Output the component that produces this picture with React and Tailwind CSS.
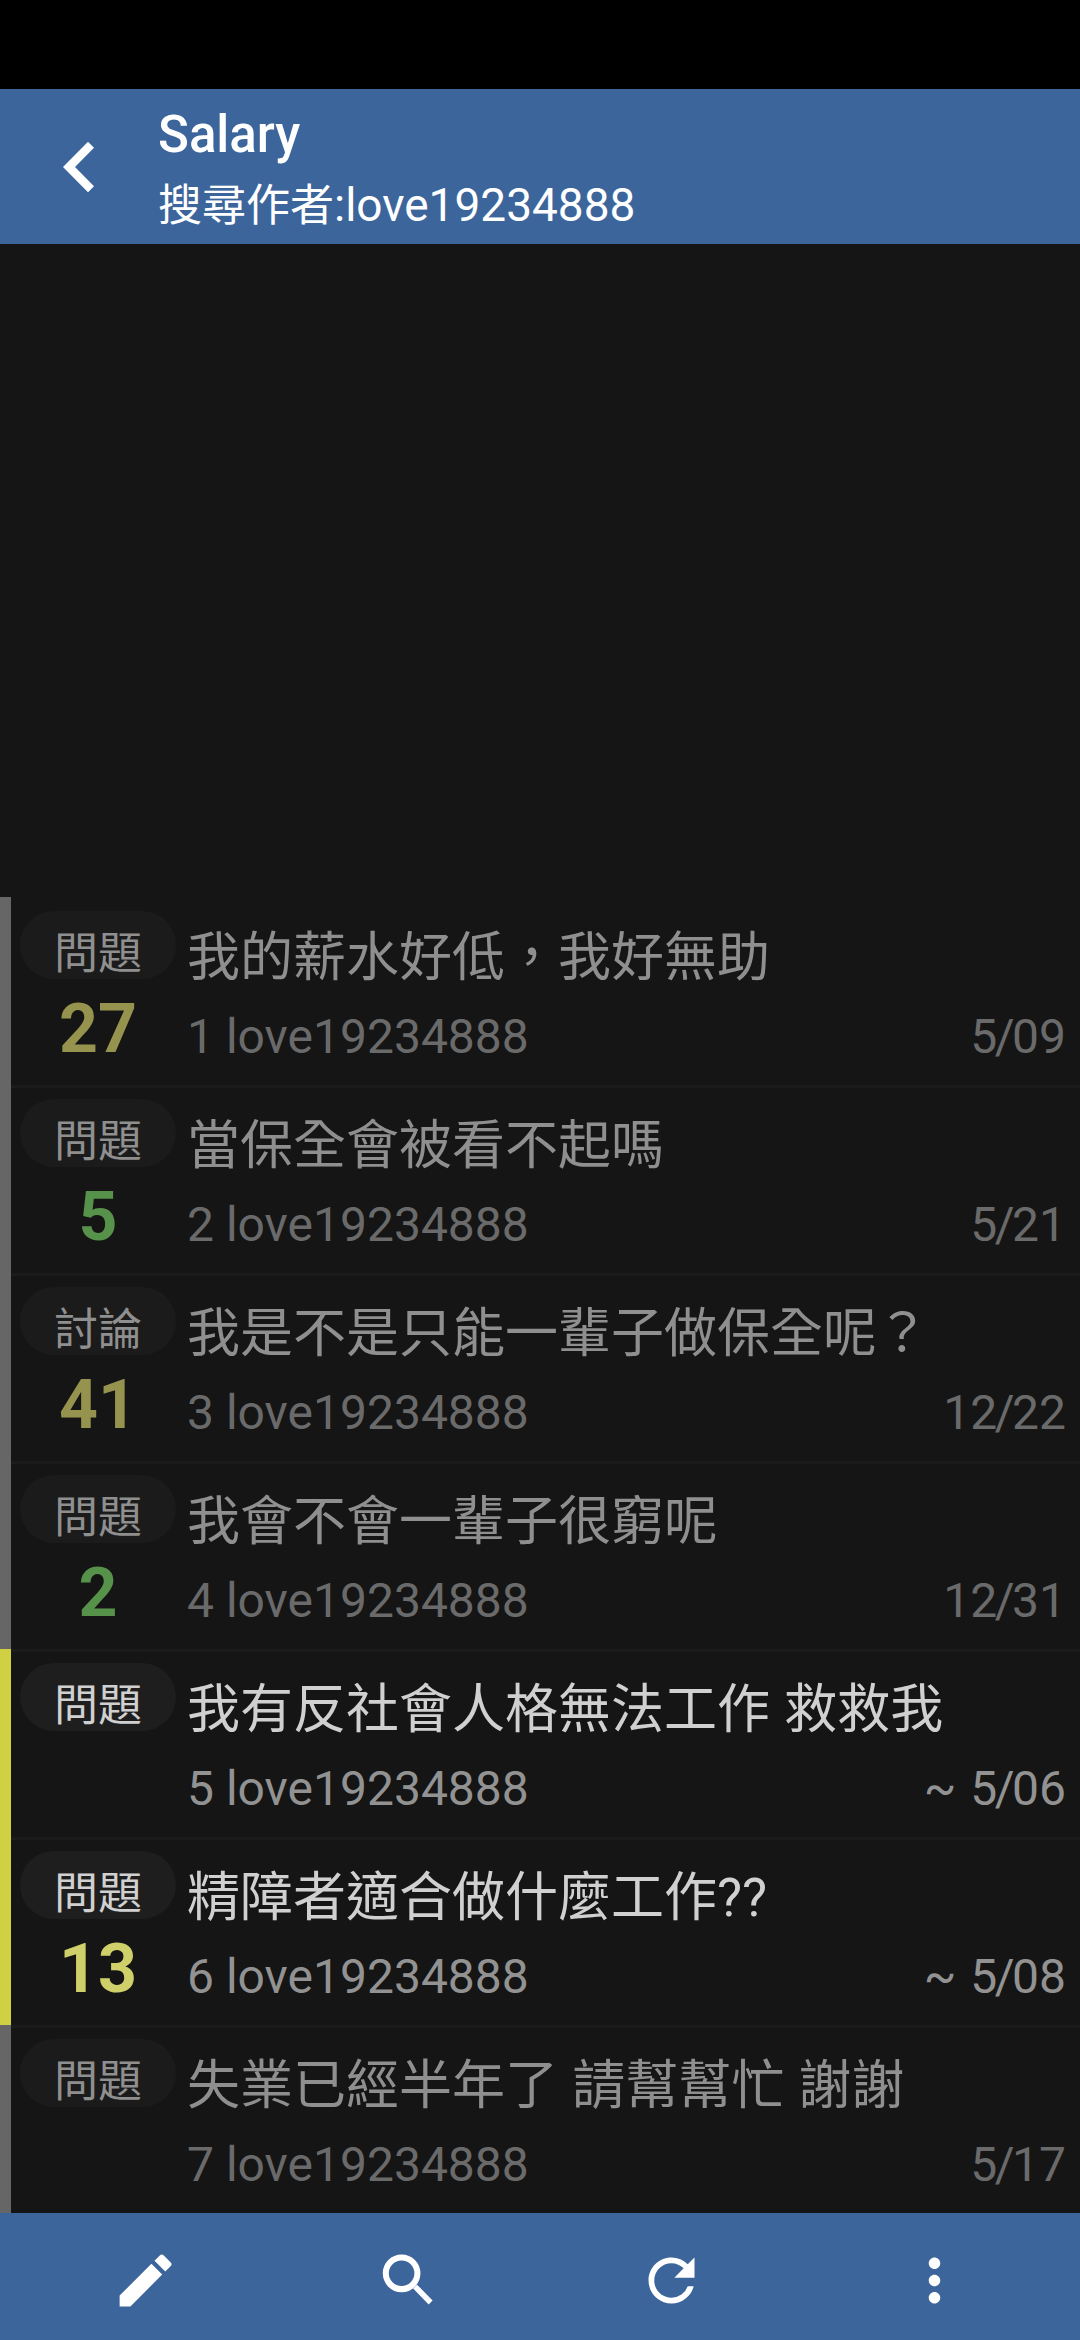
import { Fragment } from "react";
import { MdEdit, MdRefresh, MdMoreVert } from "react-icons/md";

const posts = [
  { tag: "問題", count: "27", tone: "olive", title: "我的薪水好低，我好無助", meta: "1 love19234888", date: "5/09" },
  { tag: "問題", count: "5", tone: "green", title: "當保全會被看不起嗎", meta: "2 love19234888", date: "5/21" },
  { tag: "討論", count: "41", tone: "olive", title: "我是不是只能一輩子做保全呢？", meta: "3 love19234888", date: "12/22" },
  { tag: "問題", count: "2", tone: "green", title: "我會不會一輩子很窮呢", meta: "4 love19234888", date: "12/31" },
  { tag: "問題", count: "", tone: "olive", title: "我有反社會人格無法工作 救救我", meta: "5 love19234888", date: "~ 5/06", unread: true },
  { tag: "問題", count: "13", tone: "yellow", title: "精障者適合做什麼工作??", meta: "6 love19234888", date: "~ 5/08", unread: true },
  { tag: "問題", count: "", tone: "olive", title: "失業已經半年了 請幫幫忙 謝謝", meta: "7 love19234888", date: "5/17" },
];

const tones = {
  olive: "text-[#96934e]",
  green: "text-[#57924a]",
  yellow: "text-[#d0d06a]",
};

// Month and day with a tightly set slash between them.
function PostDate({ value }) {
  return (
    <span className="[word-spacing:2px]">
      {value.split("/").map((part, i) => (
        <Fragment key={i}>
          {i > 0 && <span className="-mx-[2.5px]">/</span>}
          {part}
        </Fragment>
      ))}
    </span>
  );
}

function SearchIcon() {
  return (
    <svg className="size-[69px]" viewBox="0 0 24 24" fill="none" stroke="currentColor">
      <circle cx="9.6" cy="9.5" r="5.5" strokeWidth="2.1" />
      <path d="M14.3 14.1 19.7 19.65" strokeWidth="1.9" />
    </svg>
  );
}

function Post({ post, first }) {
  const { unread } = post;
  return (
    <li className="flex h-[188px]">
      <div className={`w-[11px] shrink-0 ${unread ? "bg-[#cfd142]" : "bg-[#666666]"}`} />
      <div className={`flex min-w-0 flex-1 border-t-[3px] pl-[9px] ${first ? "border-transparent" : "border-[#1b1b1b]"}`}>
        <div className="flex w-[156px] shrink-0 flex-col items-center pt-[11px]">
          <div className={`flex h-[68px] w-full justify-center rounded-full pt-[13px] text-[44px] leading-[60px] ${unread ? "bg-[#1e1e1e] text-[#d0d0d0]" : "bg-[#1b1b1b] text-[#8f8f8f]"}`}>
            {post.tag}
          </div>
          <div className={`mt-[12px] text-[68px] leading-[76px] font-bold ${tones[post.tone]}`}>{post.count}</div>
        </div>
        <div className="min-w-0 flex-1 pr-[14px] pl-[11px]">
          <div className={`mt-[20px] text-[53px] leading-[76px] whitespace-nowrap [word-spacing:1px] ${unread ? "text-[#d0d0d0]" : "text-[#8f8f8f]"}`}>
            {post.title}
          </div>
          <div className={`mt-[11px] flex justify-between text-[48px] leading-[60px] ${unread ? "text-[#929292]" : "text-[#6a6a6a]"}`}>
            <span>{post.meta}</span>
            <PostDate value={post.date} />
          </div>
        </div>
      </div>
    </li>
  );
}

export default function App() {
  return (
    <div className="flex h-[2340px] w-[1080px] flex-col overflow-hidden bg-[#151515] font-[Roboto,'Noto_Sans_CJK_TC',sans-serif]">
      <div className="h-[89px] shrink-0 bg-black" />
      <header className="flex h-[155px] shrink-0 bg-[#3c659b] text-white">
        <button className="flex w-[158px] shrink-0 pt-[52px] pl-[62px]" aria-label="Back">
          <svg className="h-[52px] w-[34px]" viewBox="0 0 34 52" fill="currentColor">
            <path d="M26 .7 1 26l25 25.3 6-6L13 26 32 6.7z" />
          </svg>
        </button>
        <div>
          <h1 className="mt-[16px] text-[51px] leading-[60px] font-medium">Salary</h1>
          <p className="mt-[10px] text-[44px] leading-[60px]">
            搜尋作者<span className="text-[46px]">:love19234888</span>
          </p>
        </div>
      </header>
      <main className="flex flex-1 flex-col justify-end">
        <ul>
          {posts.map((post, i) => (
            <Post key={post.meta} post={post} first={i === 0} />
          ))}
        </ul>
      </main>
      <footer className="grid h-[127px] shrink-0 grid-cols-4 items-center justify-items-center bg-[#3c659b] px-[14px] pt-[7px] text-[69px] text-white">
        <MdEdit />
        <SearchIcon />
        <MdRefresh />
        <MdMoreVert />
      </footer>
    </div>
  );
}
